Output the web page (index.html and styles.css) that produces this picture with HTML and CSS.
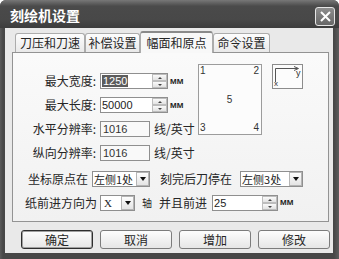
FILE: index.html
```html
<!DOCTYPE html>
<html lang="zh-CN">
<head>
    <meta charset="UTF-8">
    <meta name="viewport" content="width=device-width, initial-scale=1.0">
    <title>刻绘机设置</title>
    <link rel="stylesheet" href="styles.css">
</head>
<body>

<div class="window">
    <div class="titlebar">
        <span class="title">刻绘机设置</span>
        <span class="close-btn">
            <svg width="11" height="11" viewBox="0 0 11 11"><path d="M1 1 L10 10 M10 1 L1 10" stroke="#fff" stroke-width="2"/></svg>
        </span>
    </div>

    <div class="client">
        <div class="tabs">
            <div class="tab tab-speed">刀压和刀速</div>
            <div class="tab tab-comp">补偿设置</div>
            <div class="tab tab-size active">幅面和原点</div>
            <div class="tab tab-cmd">命令设置</div>
        </div>

        <div class="panel">
            <div class="top-area">
                <div class="fields">
                    <div class="label">最大宽度:</div>
                    <div class="field">
                        <div class="numbox">
                            <span class="num-text"><span class="sel">1250</span></span>
                            <span class="spin"><i class="up"></i><i class="down"></i></span>
                        </div>
                        <span class="mm">MM</span>
                    </div>

                    <div class="label">最大长度:</div>
                    <div class="field">
                        <div class="numbox">
                            <span class="num-text">50000</span>
                            <span class="spin"><i class="up"></i><i class="down"></i></span>
                        </div>
                        <span class="mm">MM</span>
                    </div>

                    <div class="label">水平分辨率:</div>
                    <div class="field">
                        <div class="edit">1016</div>
                        <span class="unit">线/英寸</span>
                    </div>

                    <div class="label">纵向分辨率:</div>
                    <div class="field">
                        <div class="edit">1016</div>
                        <span class="unit">线/英寸</span>
                    </div>
                </div>

                <div class="paper">
                    <div class="corner-row"><span>1</span><span>2</span></div>
                    <div class="center-num">5</div>
                    <div class="corner-row"><span>3</span><span>4</span></div>
                </div>

                <div class="axes">
                    <svg width="31" height="25" viewBox="0 0 31 25">
                        <rect x="0.5" y="0.5" width="30" height="24" fill="#fcfcfc" stroke="#8c8c8c"/>
                        <path d="M3.5 4.5 H26 M3.5 4.5 V18" stroke="#555" fill="none"/>
                        <path d="M22 2.5 L26.5 4.5 L22 6.5" stroke="#555" fill="none"/>
                        <text x="24" y="12" font-size="9" font-family="Liberation Sans" fill="#333">y</text>
                        <text x="2" y="22" font-size="8" font-family="Liberation Sans" fill="#333">x</text>
                    </svg>
                </div>
            </div>

            <div class="opt-row origin-row">
                <span>坐标原点在</span>
                <div class="combo combo-origin">
                    <span class="combo-val">左侧1处</span>
                    <span class="combo-btn"></span>
                </div>
                <span class="after-label">刻完后刀停在</span>
                <div class="combo combo-stop">
                    <span class="combo-val">左侧3处</span>
                    <span class="combo-btn"></span>
                </div>
            </div>

            <div class="opt-row feed-row">
                <span>纸前进方向为</span>
                <div class="combo combo-axis">
                    <span class="combo-val axis-val">X</span>
                    <span class="combo-btn"></span>
                </div>
                <span class="axis-word">轴</span>
                <span class="advance-label">并且前进</span>
                <div class="numbox feed-box">
                    <span class="num-text">25</span>
                    <span class="spin"><i class="up"></i><i class="down"></i></span>
                </div>
                <span class="mm">MM</span>
            </div>
        </div>

        <div class="buttons">
            <div class="btn default">确定</div>
            <div class="btn">取消</div>
            <div class="btn">增加</div>
            <div class="btn">修改</div>
        </div>
    </div>
</div>

</body>
</html>
```

FILE: styles.css
```css
body {
    margin: 0;
    font-family: "Noto Sans CJK SC", "Liberation Sans", sans-serif;
    font-size: 12px;
    color: #262626;
    background: #fff;
}
.window {
    width: 339px;
    height: 259px;
    display: flex;
    flex-direction: column;
    background: linear-gradient(90deg, #5a5a5a, #474747 3px, #474747 334px, #5e5e5e);
    border-radius: 6px 6px 0 0;
    overflow: hidden;
}
.titlebar {
    height: 28px;
    flex: none;
    display: flex;
    align-items: center;
    justify-content: space-between;
    padding: 0 4px 0 10px;
    background: linear-gradient(#777, #4a4a4a 22%, #484848 70%, #3c3c3c);
}
.title {
    color: #fff;
    font-weight: 700;
    font-size: 14px;
    line-height: 16px;
    margin-top: 2px;
}
.close-btn {
    width: 20px;
    height: 19px;
    margin-top: 5px;
    box-sizing: border-box;
    border: 1px solid #e6e6e6;
    border-radius: 3px;
    background: linear-gradient(#8e8e8e, #676767);
    display: flex;
    align-items: center;
    justify-content: center;
}
.client {
    flex: 1;
    margin: 0 6px 6px 5px;
    background: #e9e9e9;
    display: flex;
    flex-direction: column;
}

/* tabs */
.tabs {
    display: flex;
    align-items: flex-end;
    height: 21px;
    margin: 3px 0 0 10px;
    position: relative;
    z-index: 1;
}
.tab {
    height: 19px;
    box-sizing: border-box;
    border: 1px solid #acacac;
    border-bottom: none;
    border-radius: 3px 3px 0 0;
    background: linear-gradient(#fdfdfd, #e9e9e9);
    text-align: center;
    line-height: 18px;
    white-space: nowrap;
}
.tab-speed { width: 70px; }
.tab-comp { width: 55px; }
.tab-size { width: 73px; }
.tab-cmd { width: 57px; }
.tab.active {
    height: 22px;
    margin-bottom: -1px;
    background: #f8f8f8;
    border-top: 2px solid #8a8a8a;
    line-height: 19px;
}

/* page */
.panel {
    margin-left: 7px;
    width: 317px;
    height: 170px;
    box-sizing: border-box;
    border: 1px solid #939393;
    background: linear-gradient(#fafafa, #f1f1f1);
    padding-top: 11px;
}
.top-area {
    display: flex;
    align-items: flex-start;
    height: 71px;
}
.fields {
    width: 185px;
    margin-top: 9px;
    display: grid;
    grid-template-columns: 87px 1fr;
    grid-auto-rows: 16px;
    row-gap: 8px;
}
.label {
    text-align: right;
    padding-right: 4px;
    line-height: 16px;
    white-space: nowrap;
}
.field {
    display: flex;
    align-items: center;
}
.numbox {
    width: 68px;
    height: 16px;
    box-sizing: border-box;
    border: 1px solid #8f8f8f;
    background: #fff;
    display: flex;
}
.num-text {
    flex: 1;
    font-family: "Liberation Sans", sans-serif;
    font-size: 11px;
    line-height: 14px;
    padding-left: 1px;
    color: #222;
}
.sel {
    background: #5c5c5c;
    color: #fff;
    padding: 0 1px;
}
.spin {
    width: 15px;
    display: flex;
    flex-direction: column;
}
.spin i {
    flex: 1;
    border: 1px solid #bdbdbd;
    background: linear-gradient(#fafafa, #e2e2e2);
    display: flex;
    align-items: center;
    justify-content: center;
}
.spin i::after {
    content: "";
    border-left: 2px solid transparent;
    border-right: 2px solid transparent;
}
.spin .up::after { border-bottom: 2px solid #444; }
.spin .down::after { border-top: 2px solid #444; }
.mm {
    margin-left: 2px;
    font-family: "Liberation Sans", sans-serif;
    font-weight: 700;
    font-size: 8px;
    color: #222;
}
.edit {
    width: 50px;
    height: 16px;
    box-sizing: border-box;
    border: 1px solid #8f8f8f;
    background: #f9f9f9;
    font-family: "Liberation Sans", sans-serif;
    font-size: 11px;
    line-height: 14px;
    padding-left: 2px;
    color: #333;
}
.unit {
    margin-left: 4px;
    line-height: 16px;
    white-space: nowrap;
}
.paper {
    width: 64px;
    height: 71px;
    box-sizing: border-box;
    border: 1px solid #9c9c9c;
    background: #fcfcfc;
    padding: 1px 2px 1px 1px;
    display: flex;
    flex-direction: column;
    justify-content: space-between;
    font-family: "Liberation Sans", sans-serif;
    font-size: 10px;
    line-height: 10px;
    color: #333;
}
.corner-row {
    display: flex;
    justify-content: space-between;
}
.center-num {
    text-align: center;
}
.axes {
    margin-left: 10px;
    height: 25px;
}
.axes svg {
    display: block;
}

/* option rows */
.opt-row {
    display: flex;
    align-items: center;
    height: 16px;
    line-height: 16px;
    white-space: nowrap;
}
.origin-row {
    margin-top: 36px;
    padding-left: 15px;
}
.feed-row {
    margin-top: 8px;
    padding-left: 12px;
}
.combo {
    height: 16px;
    box-sizing: border-box;
    border: 1px solid #8f8f8f;
    background: #fff;
    display: flex;
    flex: none;
}
.combo-val {
    flex: 1;
    min-width: 0;
    padding-left: 1px;
    font-size: 11px;
    line-height: 14px;
    white-space: nowrap;
    overflow: hidden;
}
.combo-btn {
    width: 13px;
    flex: none;
    box-sizing: border-box;
    border: 1px solid #b5b5b5;
    background: linear-gradient(#fdfdfd, #e4e4e4);
    display: flex;
    align-items: center;
    justify-content: center;
}
.combo-btn::after {
    content: "";
    border-top: 4px solid #111;
    border-left: 3px solid transparent;
    border-right: 3px solid transparent;
}
.combo-origin { width: 58px; margin-left: 4px; }
.after-label { margin-left: 10px; }
.combo-stop { width: 63px; margin-left: 8px; }
.combo-axis { width: 35px; margin-left: 3px; }
.axis-val {
    font-family: "Liberation Serif", serif;
    font-size: 11px;
    padding-left: 3px;
}
.axis-word {
    margin-left: 7px;
    font-size: 10px;
}
.advance-label { margin-left: 7px; }
.feed-box {
    width: 66px;
    margin-left: 5px;
}

/* buttons */
.buttons {
    display: flex;
    gap: 7px;
    margin: 8px 0 0 16px;
}
.btn {
    width: 72px;
    height: 19px;
    box-sizing: border-box;
    border: 1px solid #7c7c7c;
    border-radius: 3px;
    background: linear-gradient(#fdfdfd, #e6e6e6);
    text-align: center;
    line-height: 17px;
}
.btn.default {
    border-color: #2e2e2e;
    box-shadow: inset 0 0 0 1px #a0a0a0;
}
```
